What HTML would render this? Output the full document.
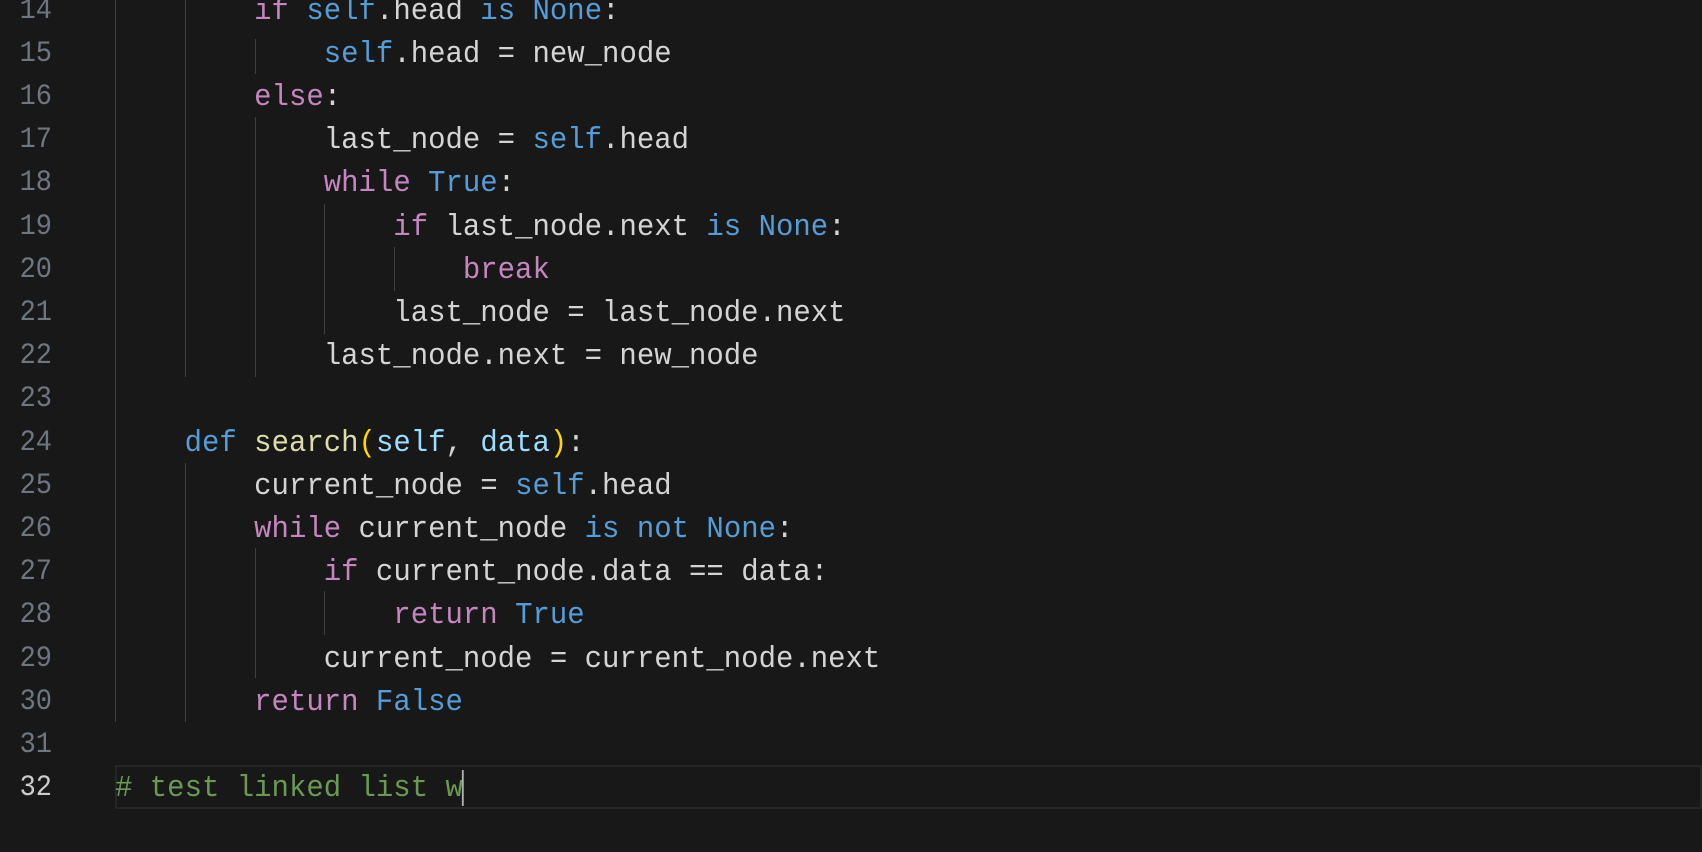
<!DOCTYPE html><html><head><style>
body{margin:0;width:1702px;height:852px;background:#181818;overflow:hidden;position:relative;font-family:"Liberation Mono",monospace;}
.ln{position:absolute;left:0;width:52px;text-align:right;color:#6e7681;font-size:30px;line-height:43.2px;transform:scaleX(0.9);transform-origin:right center}
.c{position:absolute;left:115px;font-size:31px;line-height:43.2px;color:#d4d4d4;white-space:pre;transform:scaleX(0.935);transform-origin:left center}
.g{position:absolute;width:1px;background:#404040}
.k{color:#c586c0}.b{color:#569cd6}.y{color:#dcdcaa}.p{color:#9cdcfe}.pa{color:#ffd700}.cm{color:#6a9955}
.cur{position:absolute;left:115px;right:0;border:2px solid #262626;box-sizing:border-box}
</style></head><body>
<div class="cur" style="top:765px;height:44px"></div>
<div class="g" style="left:115px;top:0;height:722px"></div>
<div class="g" style="left:185px;top:0;height:377px"></div>
<div class="g" style="left:185px;top:463px;height:259px"></div>
<div class="g" style="left:255px;top:39px;height:35px"></div>
<div class="g" style="left:255px;top:117px;height:260px"></div>
<div class="g" style="left:255px;top:548px;height:130px"></div>
<div class="g" style="left:324px;top:204px;height:130px"></div>
<div class="g" style="left:324px;top:591px;height:44px"></div>
<div class="g" style="left:394px;top:247px;height:44px"></div>
<div id="x"></div>
<script>
var L=[
[14,'        <span class="k">if</span> <span class="b">self</span>.head <span class="b">is</span> <span class="b">None</span>:'],
[15,'            <span class="b">self</span>.head = new_node'],
[16,'        <span class="k">else</span>:'],
[17,'            last_node = <span class="b">self</span>.head'],
[18,'            <span class="k">while</span> <span class="b">True</span>:'],
[19,'                <span class="k">if</span> last_node.next <span class="b">is</span> <span class="b">None</span>:'],
[20,'                    <span class="k">break</span>'],
[21,'                last_node = last_node.next'],
[22,'            last_node.next = new_node'],
[23,''],
[24,'    <span class="b">def</span> <span class="y">search</span><span class="pa">(</span><span class="p">self</span>, <span class="p">data</span><span class="pa">)</span>:'],
[25,'        current_node = <span class="b">self</span>.head'],
[26,'        <span class="k">while</span> current_node <span class="b">is</span> <span class="b">not</span> <span class="b">None</span>:'],
[27,'            <span class="k">if</span> current_node.data == data:'],
[28,'                <span class="k">return</span> <span class="b">True</span>'],
[29,'            current_node = current_node.next'],
[30,'        <span class="k">return</span> <span class="b">False</span>'],
[31,''],
[32,'<span class="cm"># test linked list w</span><span style="display:inline-block;width:2px;height:36px;background:#aeafad;vertical-align:middle;margin-left:-1px"></span>']];
var h='';L.forEach(function(l){var t=-10.5+(l[0]-14)*43.2;
h+='<div class="ln" style="top:'+t+'px'+(l[0]==32?';color:#cccccc':'')+'">'+l[0]+'</div><div class="c" style="top:'+t+'px">'+l[1]+'</div>';});
document.getElementById('x').innerHTML=h;
</script>
</body></html>
